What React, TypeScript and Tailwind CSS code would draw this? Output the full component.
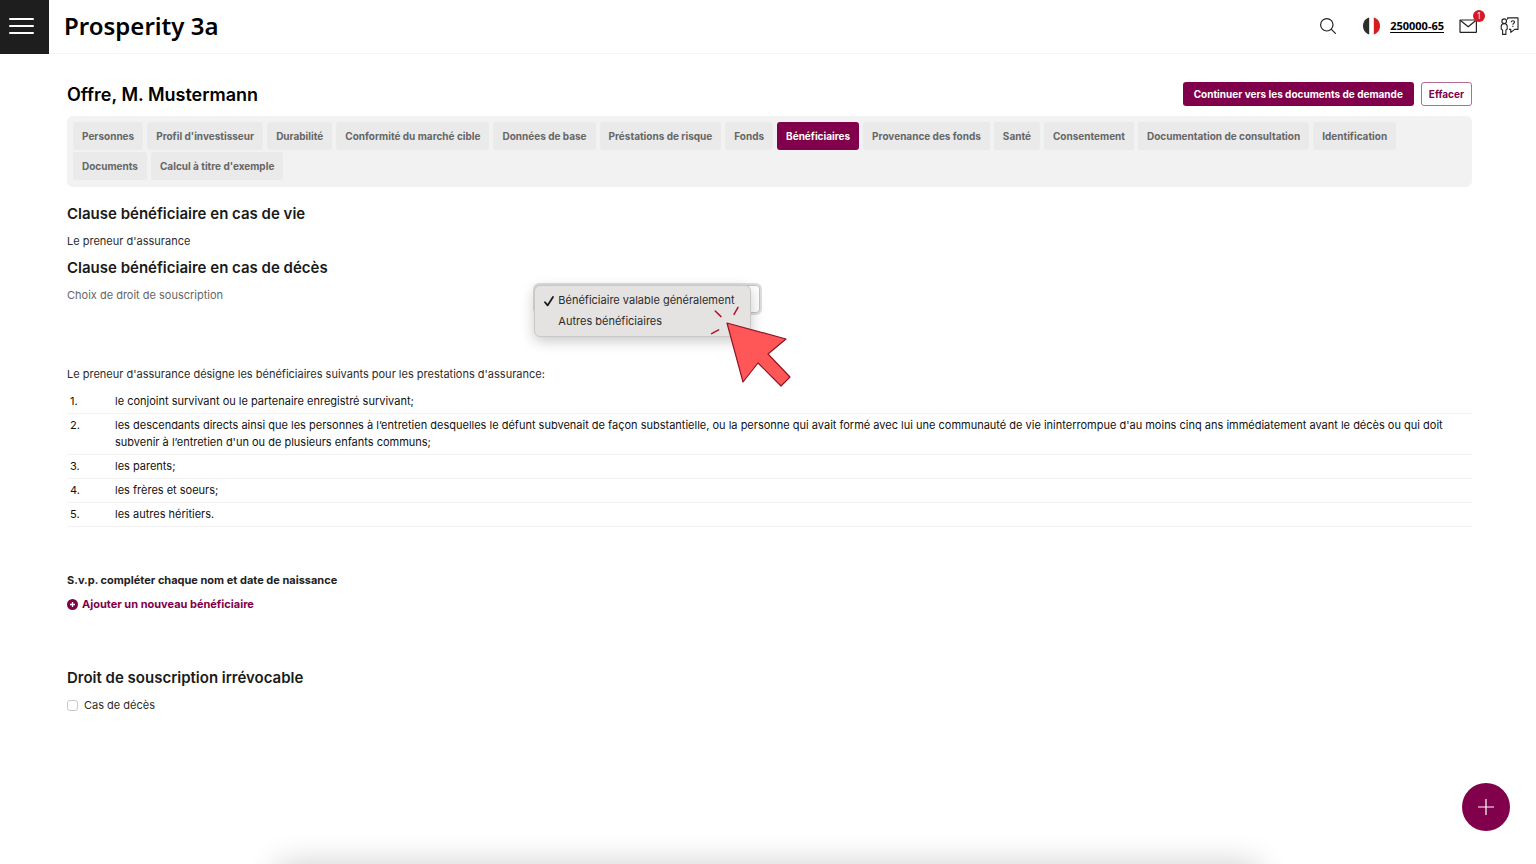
import { FC, ReactNode } from "react";

interface Tab {
  label: string;
  active?: boolean;
}

const tabs: Tab[] = [
  { label: "Personnes" },
  { label: "Profil d'investisseur" },
  { label: "Durabilité" },
  { label: "Conformité du marché cible" },
  { label: "Données de base" },
  { label: "Préstations de risque" },
  { label: "Fonds" },
  { label: "Bénéficiaires", active: true },
  { label: "Provenance des fonds" },
  { label: "Santé" },
  { label: "Consentement" },
  { label: "Documentation de consultation" },
  { label: "Identification" },
  { label: "Documents" },
  { label: "Calcul à titre d'exemple" },
];

const beneficiaries = [
  "le conjoint survivant ou le partenaire enregistré survivant;",
  "les descendants directs ainsi que les personnes à l’entretien desquelles le défunt subvenait de façon substantielle, ou la personne qui avait formé avec lui une communauté de vie ininterrompue d'au moins cinq ans immédiatement avant le décès ou qui doit subvenir à l’entretien d'un ou de plusieurs enfants communs;",
  "les parents;",
  "les frères et soeurs;",
  "les autres héritiers.",
];

const Header: FC = () => (
  <header className="flex h-[54px] items-center border-b border-[#f5f5f5] pb-[2px]">
    <button type="button" aria-label="Menu" className="flex h-[54px] w-[49px] items-center self-start bg-[#1e1e1e] pl-[9px]">
      <svg width="25" height="20" viewBox="0 0 25 20" stroke="#fff" strokeWidth="2" strokeLinecap="round">
        <path d="M1 2H24M1 9H24M1 16H24" />
      </svg>
    </button>
    <div className="ml-[15px] font-['Noto_Sans',sans-serif] text-2xl font-semibold text-black">Prosperity 3a</div>
    <div className="ml-auto flex items-center pr-[17px]">
      <button type="button" aria-label="Rechercher" className="mr-[25px]">
        <svg width="18" height="18" viewBox="0 0 18 18" fill="none" stroke="#222" strokeWidth="1.2" strokeLinecap="round">
          <circle cx="7.8" cy="7.8" r="6.2" />
          <path d="M12.4 12.4L16.4 16.4" />
        </svg>
      </button>
      <svg className="mr-[9px]" width="19" height="18" viewBox="0 0 19 18">
        <path d="M7.2 .6V17.4C3.4 16.4 1 13 1 9S3.4 1.6 7.2 .6Z" fill="#2d2d2d" />
        <path d="M11.8 .6V17.4C15.6 16.4 18 13 18 9S15.6 1.6 11.8 .6Z" fill="#d71920" />
      </svg>
      <a href="#" className="pt-[2px] font-['Open_Sans',sans-serif] text-[11px] font-bold text-black underline underline-offset-2">
        250000-65
      </a>
      <button type="button" aria-label="Messages" className="relative ml-[15px]">
        <svg width="19" height="18" viewBox="0 0 19 18" fill="none" stroke="#222" strokeWidth="1.2" strokeLinejoin="round">
          <rect x="1" y="3" width="16.4" height="12.4" rx=".5" />
          <path d="M1.2 3.3L9.2 9.8L17.2 3.3" />
        </svg>
        <span className="absolute -top-[7px] left-[14px] flex h-3 w-3 items-center justify-center rounded-full bg-[#d71920] font-['Open_Sans',sans-serif] text-[9px] leading-none text-white">
          1
        </span>
      </button>
      <button type="button" aria-label="Aide" className="ml-[22px]">
        <svg width="19" height="20" viewBox="0 0 19 20" fill="none" stroke="#222" strokeWidth="1.1" strokeLinejoin="round">
          <circle cx="4.2" cy="5.2" r="2.3" />
          <path d="M2.6 18.4V14.2L1.2 13V10.4C1.2 8.7 2.4 7.7 4.2 7.7S7.2 8.7 7.2 10.4V13L5.9 14.2V18.4Z" />
          <path d="M7.6 3.6V1.9H18V13.4H14.7L10.8 16.4V13.4H9" />
          <path d="M11.3 6.2C11.3 5.2 12 4.7 12.9 4.7S14.5 5.2 14.5 6.1C14.5 7.2 12.9 7.3 12.9 8.7M12.9 9.8V11" />
        </svg>
      </button>
    </div>
  </header>
);

const SectionTitle: FC<{ children: ReactNode }> = ({ children }) => (
  <h2 className="text-[15px] leading-[22px] font-semibold text-[#1a1a1a]">{children}</h2>
);

const BeneficiarySelect: FC = () => (
  <div className="relative w-[225px]">
    <select
      id="choice"
      defaultValue="general"
      className="h-7 w-full appearance-none rounded border border-[#c4c4c4] bg-white px-2 text-[11px] shadow-[0_0_0_2px_#dedede]">
      <option value="general">Bénéficiaire valable généralement</option>
      <option value="others">Autres bénéficiaires</option>
    </select>
    <ul
      role="listbox"
      className="absolute top-0 -left-px z-10 w-[217px] rounded-md border border-[#c9c8c7] bg-[#e5e3e1] py-1 text-[#2b2b2b] shadow-[0_4px_14px_rgba(0,0,0,0.22)]">
      <li role="option" aria-selected="true" className="flex h-[21px] items-center whitespace-nowrap">
        <svg className="ml-[9px] mr-1" width="10" height="12" viewBox="0 0 10 12" fill="none" stroke="#1a1a1a" strokeWidth="1.8" strokeLinecap="round" strokeLinejoin="round">
          <path d="M1 7.2L3.6 10.4L9 2" />
        </svg>
        Bénéficiaire valable généralement
      </li>
      <li role="option" aria-selected="false" className="flex h-[21px] items-center pl-[23px] whitespace-nowrap">
        Autres bénéficiaires
      </li>
    </ul>
    {/* Click pointer */}
    <svg className="absolute top-5 left-[173px] z-20" width="84" height="84" viewBox="0 0 84 84" fill="none">
      <path d="M7.2 6L13 11.6M30 2.4L26 9.4M3.6 28.6L10.6 24.8" stroke="#b0122b" strokeWidth="1.5" strokeLinecap="round" />
      <path d="M19 18L78 34L60 49L82 72L73 81L50 58L35 77Z" fill="#ff5757" stroke="#8f1526" strokeWidth="1.2" strokeLinejoin="round" />
    </svg>
  </div>
);

const App: FC = () => {
  return (
    <div className="relative min-h-screen overflow-hidden bg-white font-['Inter',sans-serif] text-[11px] text-[#2b2b2b]">
      <Header />

      <main className="mr-16 ml-[67px] pt-7">
        <div className="flex items-start justify-between">
          <h1 className="text-lg leading-[26px] font-semibold text-black">Offre, M. Mustermann</h1>
          <div className="flex gap-[7px]">
            <button type="button" className="h-6 rounded-[3px] bg-[#80004b] px-[11px] text-[10px] font-bold text-white">
              Continuer vers les documents de demande
            </button>
            <button type="button" className="h-6 rounded-[3px] border border-[#b56a95] bg-white px-[7px] text-[10px] font-bold text-[#80004b]">
              Effacer
            </button>
          </div>
        </div>

        <nav className="mt-2 flex flex-wrap gap-x-1 gap-y-0.5 rounded-md bg-[#f2f2f2] p-[6px] pb-[7px]">
          {tabs.map((tab) => (
            <a
              key={tab.label}
              href="#"
              className={
                tab.active
                  ? "rounded-[3px] bg-[#80004b] px-[9px] text-[10px] leading-7 font-bold text-white"
                  : "rounded-[3px] bg-[#eaeaea] px-[9px] text-[10px] leading-7 font-bold text-[#666]"
              }>
              {tab.label}
            </a>
          ))}
        </nav>

        <section className="mt-4">
          <SectionTitle>Clause bénéficiaire en cas de vie</SectionTitle>
          <p className="mt-[7px] leading-[18px]">Le preneur d'assurance</p>
        </section>

        <section className="mt-[7px]">
          <SectionTitle>Clause bénéficiaire en cas de décès</SectionTitle>
          <div className="mt-[6px] flex">
            <label htmlFor="choice" className="w-1/3 leading-5 text-[#666]">
              Choix de droit de souscription
            </label>
            <BeneficiarySelect />
          </div>
          <p className="mt-[52px] leading-[18px]">
            Le preneur d'assurance désigne les bénéficiaires suivants pour les prestations d'assurance:
          </p>
          <ol className="mt-[7px] text-[#111]">
            {beneficiaries.map((text, index) => (
              <li key={index} className="flex border-b border-[#f3f3f3] py-[3px] leading-[17px]">
                <span className="w-12 shrink-0 pl-[3px]">{index + 1}.</span>
                <span className="pr-1">{text}</span>
              </li>
            ))}
          </ol>
        </section>

        <section className="mt-11">
          <h3 className="leading-[18px] font-bold text-[#222]">S.v.p. compléter chaque nom et date de naissance</h3>
          <button type="button" className="mt-[6px] flex items-center gap-1 leading-[18px] font-bold text-[#80004b]">
            <svg width="11" height="11" viewBox="0 0 11 11">
              <circle cx="5.5" cy="5.5" r="5.5" fill="#80004b" />
              <path d="M5.5 3V8M3 5.5H8" stroke="#fff" strokeWidth="1.3" />
            </svg>
            Ajouter un nouveau bénéficiaire
          </button>
        </section>

        <section className="mt-[54px] pb-12">
          <SectionTitle>Droit de souscription irrévocable</SectionTitle>
          <label className="mt-[7px] flex items-center gap-[6px] leading-[18px]">
            <input type="checkbox" className="h-[11px] w-[11px] appearance-none rounded-[3px] border border-[#c8c8c8] bg-white" />
            Cas de décès
          </label>
        </section>
      </main>

      <button
        type="button"
        aria-label="Ajouter"
        className="fixed right-[26px] bottom-[33px] z-10 flex h-12 w-12 items-center justify-center rounded-full bg-[#80004b]">
        <svg width="16" height="16" viewBox="0 0 16 16" stroke="#fff" strokeWidth="1.2">
          <path d="M8 0V16M0 8H16" />
        </svg>
      </button>
      <div className="fixed inset-x-[18%] -bottom-10 h-10 rounded-xl shadow-[0_0_32px_rgba(0,0,0,0.2)]"></div>
    </div>
  );
};

export default App;
